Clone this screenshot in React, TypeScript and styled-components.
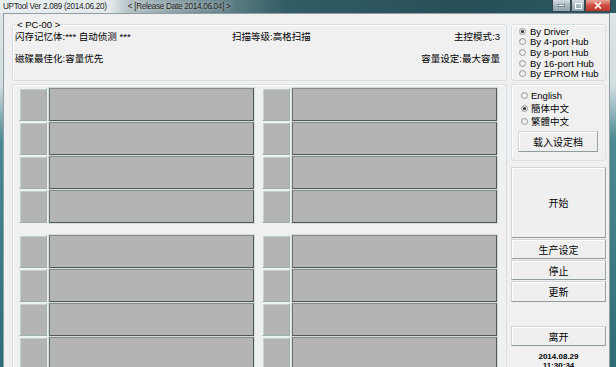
import styled, { createGlobalStyle } from "styled-components";

const GlobalStyle = createGlobalStyle`
  html, body {
    margin: 0;
    padding: 0;
    background: #2f6c74;
    overflow: hidden;
  }
  body {
    font-family: "Liberation Sans", "Noto Sans CJK SC", sans-serif;
    color: #000;
  }
`;

const Window = styled.div`
  width: 616px;
  height: 367px;
  overflow: hidden;
  display: flex;
  flex-direction: column;
  background: linear-gradient(180deg, #dde6e9 0, #d3dee1 85px, #4a8a91 140px, #2f6d75 100%);
`;

const TitleBar = styled.div`
  position: relative;
  height: 13px;
  flex: none;
  display: flex;
  align-items: flex-start;
  background: linear-gradient(
    90deg,
    #e9eef0 0,
    #e2e9ec 110px,
    #b3c0c4 130px,
    #758f95 200px,
    #335d66 285px,
    #264f58 460px,
    #2b5862 100%
  );
`;

const TitleText = styled.span<{ $ml?: number }>`
  flex: none;
  margin-left: ${(p) => p.$ml ?? 3}px;
  font-size: 8.2px;
  letter-spacing: -0.3px;
  line-height: 13px;
  color: #1c1c1c;
  white-space: nowrap;
  text-shadow: 0 0 4px rgba(255, 255, 255, 0.9);
`;

const Controls = styled.div`
  position: absolute;
  top: 0;
  right: 5px;
  width: 59px;
  height: 12px;
  display: flex;
  z-index: 2;
`;

const CtrlBtn = styled.span<{ $w: number; $close?: boolean }>`
  display: flex;
  flex: none;
  width: ${(p) => p.$w}px;
  height: 12px;
  box-sizing: border-box;
  border: 1px solid #34454c;
  border-top: none;
  background: ${(p) =>
    p.$close
      ? "linear-gradient(180deg, #e6a899 0%, #cf4d40 50%, #b8352b 100%)"
      : "linear-gradient(180deg, #d3dde2 0%, #a7b8c0 50%, #8fa5af 100%)"};
  align-items: center;
  justify-content: center;
`;

const Frame = styled.div`
  flex: 1;
  min-height: 0;
  display: flex;
  padding: 0 6px 0 3px;
`;

const Client = styled.div`
  flex: 1;
  display: flex;
  gap: 4px;
  background: #f0f0f0;
  border: 1px solid #8e9ea4;
  border-bottom: none;
  padding: 10px 3px 0 8px;
  overflow: hidden;
`;

const Main = styled.div`
  width: 495px;
  flex: none;
  display: flex;
  flex-direction: column;
`;

const InfoGroup = styled.div`
  position: relative;
  flex: none;
  height: 57px;
  box-sizing: border-box;
  border: 1px solid #d5dfe5;
  border-radius: 3px;
  box-shadow: inset 1px 1px 0 #fff;
  padding: 4.5px 6px 0 2px;
  display: grid;
  grid-template-columns: 217px 1fr auto;
  grid-auto-rows: 14px;
  row-gap: 8.5px;
  font-size: 9.5px;
  line-height: 14px;
  white-space: nowrap;
  & > span:nth-child(3n + 1) {
    justify-self: end;
  }
`;

const Legend = styled.span`
  position: absolute;
  top: -6px;
  left: 3px;
  padding: 0 1px;
  background: #f0f0f0;
  font-size: 9.5px;
  line-height: 11px;
`;

const SlotPanel = styled.div`
  margin-top: 3px;
  flex: 1;
  border: 1px solid #d5dfe5;
  border-bottom: none;
  border-radius: 3px 3px 0 0;
  box-shadow: inset 1px 1px 0 #fff;
  padding: 3px 9px 0 6px;
`;

const SlotGrid = styled.div`
  display: grid;
  grid-template-columns: repeat(2, 235px);
  column-gap: 8px;
  row-gap: 12px;
`;

const Quadrant = styled.div`
  display: flex;
  flex-direction: column;
  gap: 1px;
`;

const SlotRow = styled.div`
  display: flex;
  height: 33px;
  flex: none;
  gap: 2px;
`;

const PortBox = styled.div`
  width: 28px;
  box-sizing: border-box;
  background: #b4b4b4;
  border: 1px solid;
  border-color: #eaf2f2 #9db0b0 #9db0b0 #eaf2f2;
  box-shadow: inset 1px 1px 0 #c6d0d0;
`;

const StatusBox = styled.div`
  flex: 1;
  box-sizing: border-box;
  background: #b4b4b4;
  border: 1px solid;
  border-color: #868c8c #4f5757 #4f5757 #6a7272;
  box-shadow: 0 0 0 1px #d3dbdb;
`;

const Side = styled.div`
  width: 95px;
  flex: none;
  display: flex;
  flex-direction: column;
`;

const RadioGroup = styled.div<{ $h: number; $mt: number; $pt: number; $pl: number }>`
  flex: none;
  height: ${(p) => p.$h}px;
  margin-top: ${(p) => p.$mt}px;
  box-sizing: border-box;
  border: 1px solid #d5dfe5;
  border-radius: 3px;
  box-shadow: inset 1px 1px 0 #fff;
  padding: ${(p) => p.$pt}px 0 0 ${(p) => p.$pl}px;
  display: flex;
  flex-direction: column;
`;

const RadioRow = styled.div<{ $h: number; $gap: number }>`
  display: flex;
  flex: none;
  align-items: center;
  height: ${(p) => p.$h}px;
  gap: ${(p) => p.$gap}px;
  font-size: 9.5px;
  white-space: nowrap;
`;

const RadioDot = styled.span<{ $on?: boolean }>`
  position: relative;
  width: 7px;
  height: 7px;
  flex: none;
  box-sizing: border-box;
  border-radius: 50%;
  border: 1px solid #9a9a9a;
  background: radial-gradient(circle at 60% 60%, #fdfdfd, #d8d8d8);
  &::after {
    content: "";
    display: ${(p) => (p.$on ? "block" : "none")};
    position: absolute;
    left: 1px;
    top: 1px;
    width: 3px;
    height: 3px;
    border-radius: 50%;
    background: #2a2a2a;
  }
`;

const Button = styled.div<{ $h: number; $mt: number; $w?: number; $ml?: number }>`
  height: ${(p) => p.$h}px;
  margin-top: ${(p) => p.$mt}px;
  margin-left: ${(p) => p.$ml ?? 0}px;
  width: ${(p) => (p.$w ? `${p.$w}px` : "100%")};
  flex: none;
  box-sizing: border-box;
  background: #efefef;
  border: 1px solid;
  border-color: #d4d4d4 #9a9f9f #8f9c9c #d4d4d4;
  box-shadow: inset 1px 1px 0 #fff;
  display: flex;
  align-items: center;
  justify-content: center;
  font-size: 10px;
  white-space: nowrap;
`;

const Stamp = styled.div`
  flex: none;
  margin-top: 6px;
  text-align: center;
  font-size: 8px;
  font-weight: bold;
  line-height: 9px;
`;

const driverModes = ["By Driver", "By 4-port Hub", "By 8-port Hub", "By 16-port Hub", "By EPROM Hub"];
const languages = ["English", "簡体中文", "繁體中文"];

function Slots() {
  return (
    <Quadrant>
      {[0, 1, 2, 3].map((i) => (
        <SlotRow key={i}>
          <PortBox />
          <StatusBox />
        </SlotRow>
      ))}
    </Quadrant>
  );
}

export default function App() {
  return (
    <>
      <GlobalStyle />
      <Window>
        <TitleBar>
          <TitleText>UPTool Ver 2.089 (2014.06.20)</TitleText>
          <TitleText $ml={21}>&lt; [Release Date 2014.06.04] &gt;</TitleText>
          <Controls>
            <CtrlBtn $w={19}>
              <svg width="7" height="3" viewBox="0 0 7 3">
                <rect x="0.25" y="0.25" width="6.5" height="2" fill="#fff" stroke="#34434a" strokeWidth="0.5" />
              </svg>
            </CtrlBtn>
            <CtrlBtn $w={14}>
              <svg width="7" height="6" viewBox="0 0 7 6">
                <rect x="0.5" y="0.5" width="6" height="5" fill="none" stroke="#fff" strokeWidth="1" />
              </svg>
            </CtrlBtn>
            <CtrlBtn $w={26} $close>
              <svg width="8" height="7" viewBox="0 0 8 7">
                <path d="M1 0.5 L7 6.5 M7 0.5 L1 6.5" stroke="#fff" strokeWidth="1.6" />
              </svg>
            </CtrlBtn>
          </Controls>
        </TitleBar>
        <Frame>
          <Client>
            <Main>
              <InfoGroup>
                <Legend>&lt; PC-00 &gt;</Legend>
                <span>闪存记忆体:*** 自动侦测 ***</span>
                <span>扫描等级:高格扫描</span>
                <span>主控模式:3</span>
                <span>磁碟最佳化:容量优先</span>
                <span />
                <span>容量设定:最大容量</span>
              </InfoGroup>
              <SlotPanel>
                <SlotGrid>
                  <Slots />
                  <Slots />
                  <Slots />
                  <Slots />
                </SlotGrid>
              </SlotPanel>
            </Main>
            <Side>
              <RadioGroup $h={57} $mt={0} $pt={1} $pl={7}>
                {driverModes.map((m, i) => (
                  <RadioRow key={m} $h={10.6} $gap={4}>
                    <RadioDot $on={i === 0} />
                    {m}
                  </RadioRow>
                ))}
              </RadioGroup>
              <RadioGroup $h={77} $mt={3} $pt={3.5} $pl={9}>
                {languages.map((l, i) => (
                  <RadioRow key={l} $h={13} $gap={3}>
                    <RadioDot $on={i === 1} />
                    {l}
                  </RadioRow>
                ))}
                <Button $h={21} $mt={3.5} $w={80} $ml={-3}>
                  载入设定档
                </Button>
              </RadioGroup>
              <Button $h={71} $mt={6}>
                开始
              </Button>
              <Button $h={20} $mt={1}>
                生产设定
              </Button>
              <Button $h={20} $mt={1}>
                停止
              </Button>
              <Button $h={21} $mt={1}>
                更新
              </Button>
              <Button $h={20} $mt={24}>
                离开
              </Button>
              <Stamp>
                2014.08.29
                <br />
                11:30:34
              </Stamp>
            </Side>
          </Client>
        </Frame>
      </Window>
    </>
  );
}
